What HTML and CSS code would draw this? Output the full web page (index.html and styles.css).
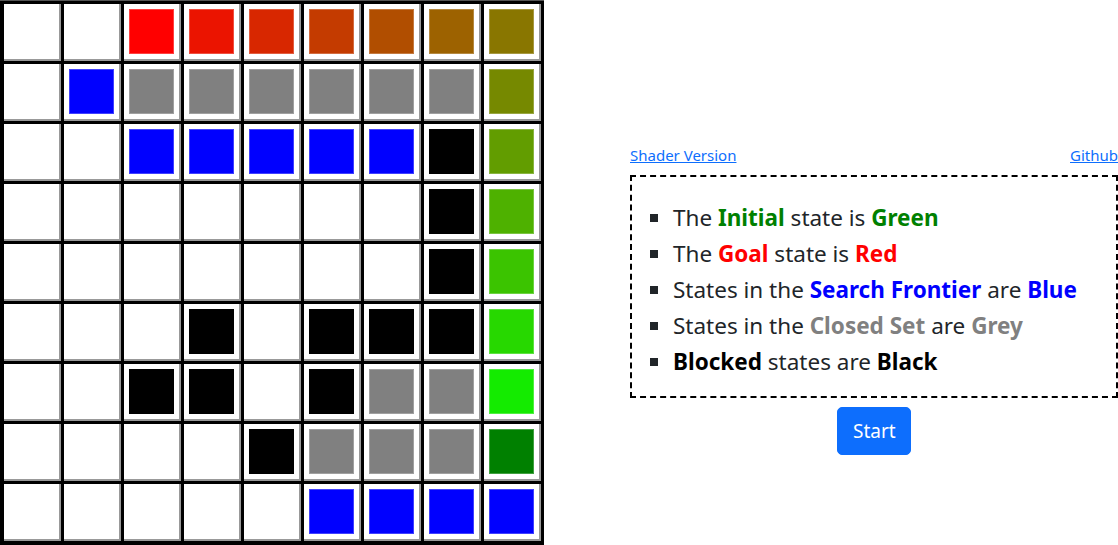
FILE: index.html
```html
<!DOCTYPE html>
<html>
<head>
<meta charset="utf-8">
<link rel="stylesheet" href="styles.css">
</head>
<body>
<div class="page">
  <div class="board">
    <div class="cell"></div><div class="cell"></div><div class="cell"><div class="sq h0"></div></div><div class="cell"><div class="sq h1"></div></div><div class="cell"><div class="sq h2"></div></div><div class="cell"><div class="sq h3"></div></div><div class="cell"><div class="sq h4"></div></div><div class="cell"><div class="sq h5"></div></div><div class="cell"><div class="sq h6"></div></div>
    <div class="cell"></div><div class="cell"><div class="sq blue"></div></div><div class="cell"><div class="sq grey"></div></div><div class="cell"><div class="sq grey"></div></div><div class="cell"><div class="sq grey"></div></div><div class="cell"><div class="sq grey"></div></div><div class="cell"><div class="sq grey"></div></div><div class="cell"><div class="sq grey"></div></div><div class="cell"><div class="sq h7"></div></div>
    <div class="cell"></div><div class="cell"></div><div class="cell"><div class="sq blue"></div></div><div class="cell"><div class="sq blue"></div></div><div class="cell"><div class="sq blue"></div></div><div class="cell"><div class="sq blue"></div></div><div class="cell"><div class="sq blue"></div></div><div class="cell"><div class="sq black"></div></div><div class="cell"><div class="sq h8"></div></div>
    <div class="cell"></div><div class="cell"></div><div class="cell"></div><div class="cell"></div><div class="cell"></div><div class="cell"></div><div class="cell"></div><div class="cell"><div class="sq black"></div></div><div class="cell"><div class="sq h9"></div></div>
    <div class="cell"></div><div class="cell"></div><div class="cell"></div><div class="cell"></div><div class="cell"></div><div class="cell"></div><div class="cell"></div><div class="cell"><div class="sq black"></div></div><div class="cell"><div class="sq h10"></div></div>
    <div class="cell"></div><div class="cell"></div><div class="cell"></div><div class="cell"><div class="sq black"></div></div><div class="cell"></div><div class="cell"><div class="sq black"></div></div><div class="cell"><div class="sq black"></div></div><div class="cell"><div class="sq black"></div></div><div class="cell"><div class="sq h11"></div></div>
    <div class="cell"></div><div class="cell"></div><div class="cell"><div class="sq black"></div></div><div class="cell"><div class="sq black"></div></div><div class="cell"></div><div class="cell"><div class="sq black"></div></div><div class="cell"><div class="sq grey"></div></div><div class="cell"><div class="sq grey"></div></div><div class="cell"><div class="sq h12"></div></div>
    <div class="cell"></div><div class="cell"></div><div class="cell"></div><div class="cell"></div><div class="cell"><div class="sq black"></div></div><div class="cell"><div class="sq grey"></div></div><div class="cell"><div class="sq grey"></div></div><div class="cell"><div class="sq grey"></div></div><div class="cell"><div class="sq green"></div></div>
    <div class="cell"></div><div class="cell"></div><div class="cell"></div><div class="cell"></div><div class="cell"></div><div class="cell"><div class="sq blue"></div></div><div class="cell"><div class="sq blue"></div></div><div class="cell"><div class="sq blue"></div></div><div class="cell"><div class="sq blue"></div></div>
  </div>
  <div class="panel">
    <div class="links">
      <a href="#">Shader Version</a>
      <a href="#">Github</a>
    </div>
    <div class="legend">
      <ul>
        <li>The <b class="c-green">Initial</b> state is <b class="c-green">Green</b></li>
        <li>The <b class="c-red">Goal</b> state is <b class="c-red">Red</b></li>
        <li>States in the <b class="c-blue">Search Frontier</b> are <b class="c-blue">Blue</b></li>
        <li>States in the <b class="c-grey">Closed Set</b> are <b class="c-grey">Grey</b></li>
        <li><b class="c-black">Blocked</b> states are <b class="c-black">Black</b></li>
      </ul>
    </div>
    <div class="actions">
      <button class="btn">Start</button>
    </div>
  </div>
</div>
</body>
</html>
```

FILE: styles.css
```css
* { box-sizing: border-box; }
html, body { margin: 0; padding: 0; background: #fff; }
body {
  font-family: "Noto Sans", "Open Sans", sans-serif;
  color: #212529;
  overflow: hidden;
}
.page {
  display: flex;
  align-items: flex-start;
  width: 1118px;
}
.board {
  flex: none;
  display: grid;
  grid-template-columns: repeat(9, 57px);
  grid-auto-rows: 57px;
  gap: 3px;
  padding: 3px 3px 4px 4px;
  background: #000;
  border-top: 1px solid #555;
}
.cell {
  background: #fff;
  border-right: 2px solid #999;
  border-bottom: 2px solid #999;
  padding: 5px;
}
.sq {
  width: 45px;
  height: 45px;
  border: 1px solid rgba(255, 255, 255, 0.25);
}
.blue { background: #0000ff; }
.grey { background: #808080; }
.black { background: #000; border-color: #000; }
.green { background: #008000; }
.h0 { background: rgb(255, 0, 0); }
.h1 { background: rgb(235, 20, 0); }
.h2 { background: rgb(216, 39, 0); }
.h3 { background: rgb(196, 59, 0); }
.h4 { background: rgb(177, 78, 0); }
.h5 { background: rgb(157, 98, 0); }
.h6 { background: rgb(137, 118, 0); }
.h7 { background: rgb(118, 137, 0); }
.h8 { background: rgb(98, 157, 0); }
.h9 { background: rgb(78, 177, 0); }
.h10 { background: rgb(59, 196, 0); }
.h11 { background: rgb(39, 216, 0); }
.h12 { background: rgb(20, 235, 0); }

.panel {
  width: 488px;
  margin-left: 86px;
  margin-top: 143px;
  display: flex;
  flex-direction: column;
}
.links {
  display: flex;
  justify-content: space-between;
  font-size: 15px;
  line-height: 24px;
  margin-bottom: 8px;
}
.links a { color: #0d6efd; text-decoration: underline; }
.legend {
  border: 2px dashed #000;
  padding: 23px 9px 16px 9px;
}
.legend ul {
  margin: 0;
  padding-left: 32px;
  list-style: square;
  font-size: 22.5px;
  line-height: 36px;
}
.legend li::marker { color: #212529; }
.legend b { font-weight: 700; }
.c-green { color: #008000; }
.c-red { color: #ff0000; }
.c-blue { color: #0000ff; }
.c-grey { color: #808080; }
.c-black { color: #000; }
.actions {
  display: flex;
  justify-content: center;
  margin-top: 9px;
}
.btn {
  font-family: "Noto Sans", "Open Sans", sans-serif;
  font-size: 19px;
  line-height: 30px;
  color: #fff;
  background: #0d6efd;
  border: 1px solid #0d6efd;
  border-radius: 5px;
  padding: 8px 15px;
  width: 74px;
  height: 48px;
}
```
